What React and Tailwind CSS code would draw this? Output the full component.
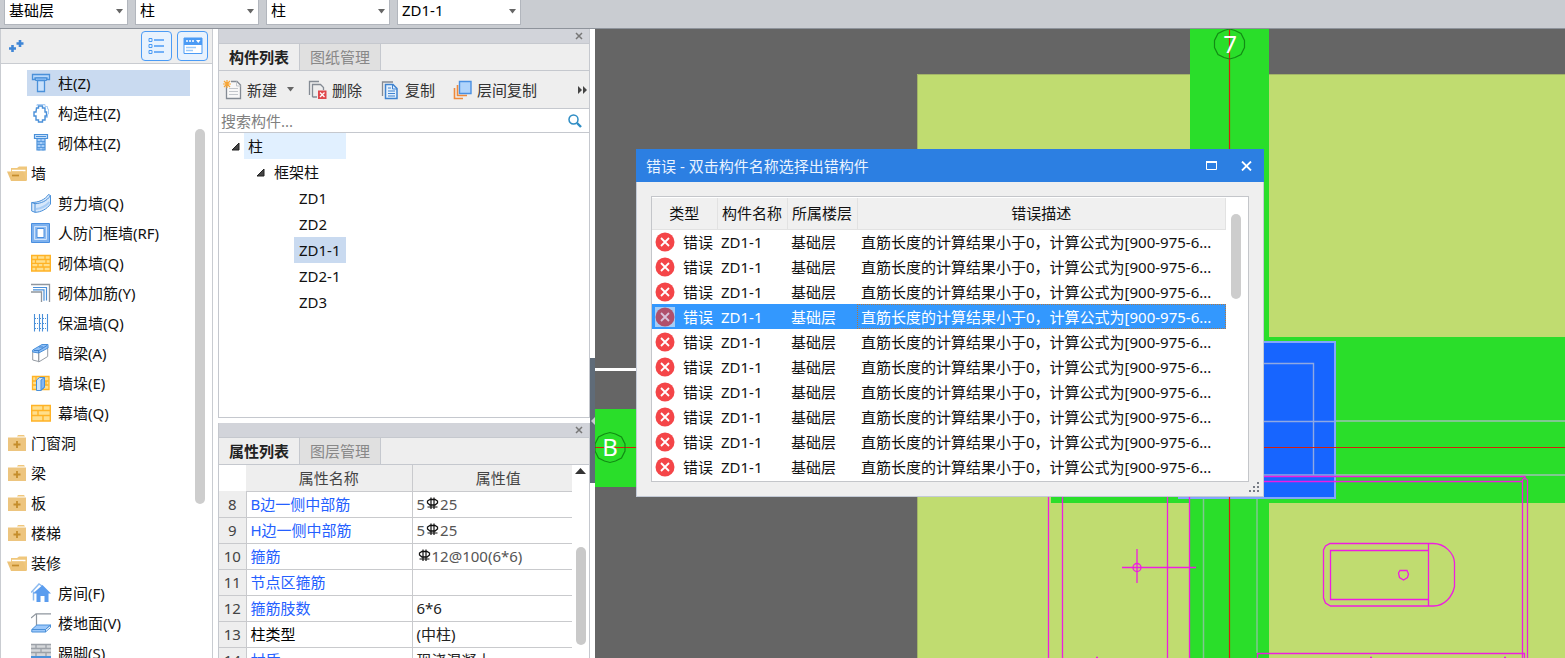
import React from "react";

const Svg = ({ w = 20, h = 20, children }) => (
  <svg width={w} height={h} viewBox={`0 0 ${w} ${h}`} fill="none" className="shrink-0" aria-hidden="true">
    {children}
  </svg>
);

const B = "#4a90d9";

const icons = {
  column: (
    <Svg>
      <path d="M1.500 1.500h17v5h-2.500v-1.500h-12v1.500h-2.500z" fill="#b9d8fb" stroke={B} strokeWidth="1.300" />
      <path d="M4.500 5h11v2.500h-11z" fill="#8fc0f7" stroke={B} />
      <path d="M6.500 7.500h7v11h-7z" fill="#c9e1fc" stroke={B} strokeWidth="1.300" />
    </Svg>
  ),
  structColumn: (
    <Svg>
      <path d="M6 3V1.500h8v2h2.500v2.500h1v5l-1 .5v3h-2.500v2" stroke="#a9cdf5" />
      <path d="M5.500 5h2v-2h4v2h2.500v4h1.500v4h-1.500v4h-2.500v2h-4v-2h-2.500v-4h-2v-4h2z" fill="#fff" stroke={B} strokeWidth="1.400" />
    </Svg>
  ),
  masonryColumn: (
    <Svg>
      <path d="M3.500 1.500h13v4h-13z" fill="#c7e0fb" stroke={B} strokeWidth="1.200" />
      <path d="M6 5.500h8v11.500h-8z" fill="#a9cff9" stroke={B} strokeWidth="1.200" />
      <path d="M6 8.500h8M6 11.500h8M6 14.500h8M10 5.500v3M8 8.500v3M12 8.500v3M10 11.500v3M8 14.500v3M12 14.500v3" stroke={B} strokeWidth=".8" />
      <path d="M5 3.500h10" stroke={B} />
    </Svg>
  ),
  shearWall: (
    <Svg>
      <path d="M.7 9.500C7 9.500 14 7 17.500 1.500l2 1v8.500C16 16 10 19.300 4 19.300L.7 18z" fill="#d7e8fb" stroke={B} />
      <path d="M.7 9.500l3.300 1.200v8.600M4 10.700C10 10.500 16 8 19.500 2.500" stroke={B} />
      <path d="M5 16C10 15.500 15 13 18.500 9" stroke="#a9cdf5" strokeWidth="2" />
    </Svg>
  ),
  doorFrame: (
    <Svg>
      <path d="M.5.500h18v19h-18z" fill="#7db1ee" stroke="#4a8fe0" />
      <path d="M3.500 3.500h12v13h-12z" fill="#8fbcf1" stroke="#cfe3fb" />
      <path d="M6 5.500h7v9h-7z" fill="#fff" stroke="#4a8fe0" />
    </Svg>
  ),
  brick: (
    <Svg>
      <path d="M.7 2.500h18.600v15.500h-18.600z" fill="#ffdf8c" stroke="#ffb326" strokeWidth="1.400" />
      <path d="M1 6.500h18M1 10.300h18M1 14h18M6.500 2.500v4M14 2.500v4M4.500 6.500v3.800M15 6.500v3.800M7 10.300v3.700M12 10.300v3.700M5 14v4M13 14v4" stroke="#ffb326" strokeWidth="1.300" />
    </Svg>
  ),
  rebar: (
    <Svg>
      <path d="M0 1.500h18.500v17.500" stroke="#8f969e" strokeWidth="1.300" />
      <path d="M0 9h10.500v10" stroke="#8f969e" strokeWidth="1.300" />
      <path d="M2 4.500h13.500v13M2 6.800h11v11" stroke={B} strokeWidth="1.200" />
    </Svg>
  ),
  insulation: (
    <Svg>
      <path d="M3.500 1v17.500M8.500 1v17.500M11.500 1v17.500M16.500 1v17.500" stroke={B} strokeWidth="1.100" />
      <path d="M4 5.500h4M12 5.500h4M4 10.500h4M12 10.500h4M4 15.500h4M12 15.500h4M9 5.500h2M9 10.500h2M9 15.500h2" stroke={B} strokeDasharray="1 1" />
    </Svg>
  ),
  hiddenBeam: (
    <Svg>
      <path d="M1.700 8.500h6v10l-6-1.500zM7.700 8.500l9-5v10l-9 5.500z" fill="#fff" stroke="#969ca4" />
      <path d="M1.700 7L11 1.500l6 0v3.500L7.700 10l-6-1z" fill="#8fc0f7" stroke={B} />
      <path d="M3 7.500h5l8-5M7.700 7.500V10M8 4l4 0" stroke="#3f83d0" />
    </Svg>
  ),
  pier: (
    <Svg>
      <path d="M1.500 3.500h16.500v13h-16.500z" fill="#ffdf8c" stroke="#ffb326" strokeWidth="1.300" />
      <path d="M1.500 8h16M1.500 12h16M5 3.500v4M15 8v4" stroke="#ffb326" strokeWidth="1.300" />
      <path d="M5.500 7l3-2.500h5v10l-3.500 3h-4.500z" fill="#d0e5fc" stroke={B} />
      <path d="M10 7v10l3.500-3V4.500z" fill="#84b7f2" stroke={B} />
    </Svg>
  ),
  curtain: (
    <Svg>
      <path d="M.7 2.500h18.600v15.500h-18.600z" fill="#ffdf8c" stroke="#ffb326" strokeWidth="1.400" />
      <path d="M1 7.500h18M1 12.500h18M12 2.500v5M7 7.500v5M12 12.500v5.500" stroke="#ffb326" strokeWidth="1.400" />
    </Svg>
  ),
  house: (
    <Svg>
      <path d="M0 9.500L8 1l3 2M2.500 8.500v9" stroke="#8dbbf0" strokeWidth="1.500" />
      <path d="M2 10.500L11.500 2 20 10.500h-2.500V19h-4v-6h-4v6h-4v-8.500z" fill="#5a9cee" />
    </Svg>
  ),
  floor: (
    <Svg>
      <path d="M0 5l5-4.200h15M5.500 1v12" stroke="#8f969e" strokeWidth="1.200" />
      <path d="M.8 16.500l5-4.500h13.700l-5 4.500v2.500h-13.700z" fill="#9cc8fa" stroke={B} />
      <path d="M.8 16.500h13.700l5-4.500v2.500l-5 4.500" stroke={B} />
    </Svg>
  ),
  skirting: (
    <Svg>
      <path d="M0 1h20v12h-20z" fill="#d5d7da" />
      <path d="M0 1.500h20M0 5.500h20M0 9.500h20M5 1.500v4M15 1.500v4M10 5.500v4M5 9.500v4M15 9.500v4" stroke="#9ca1a8" strokeWidth="1.300" />
      <path d="M0 13h20v5h-20z" fill={B} />
    </Svg>
  ),
};

const FolderOpen = () => (
  <Svg>
    <path d="M4 7V5h6l2-1.500h8V17.500H4z" fill="#f0c77c" />
    <path d="M5 7.500h13.500" stroke="#fff" strokeWidth="1.500" />
    <path d="M0 8.500h16l3.500 9.500H4z" fill="#edc378" />
    <path d="M5 12.500h7" stroke="#c58d2c" strokeWidth="1.700" />
  </Svg>
);

const FolderClosed = () => (
  <Svg>
    <path d="M10 3.500l1-1.500h6l1 1.500z" fill="#f0c77c" />
    <path d="M1 4.500h18V18H1z" fill="#edc57f" />
    <path d="M6.500 11.500h7M10 8v7" stroke="#c58d2c" strokeWidth="1.800" />
  </Svg>
);

const Rebar400 = () => (
  <svg width="13" height="13" viewBox="0 0 13 13" fill="none" stroke="#111" className="mx-px mb-1 inline-block" aria-label="HRB400">
    <path d="M4 2.500h5l2.500 1.500v2L9 8H4L1.500 6V4z" strokeWidth="1.300" />
    <path d="M5 .5V12M8 .5V12M1.500 10h10" strokeWidth="1.200" />
  </svg>
);

const tree = [
  ["柱(Z)", "column", true],
  ["构造柱(Z)", "structColumn"],
  ["砌体柱(Z)", "masonryColumn"],
  ["墙", "open"],
  ["剪力墙(Q)", "shearWall"],
  ["人防门框墙(RF)", "doorFrame"],
  ["砌体墙(Q)", "brick"],
  ["砌体加筋(Y)", "rebar"],
  ["保温墙(Q)", "insulation"],
  ["暗梁(A)", "hiddenBeam"],
  ["墙垛(E)", "pier"],
  ["幕墙(Q)", "curtain"],
  ["门窗洞", "closed"],
  ["梁", "closed"],
  ["板", "closed"],
  ["楼梯", "closed"],
  ["装修", "open"],
  ["房间(F)", "house"],
  ["楼地面(V)", "floor"],
  ["踢脚(S)", "skirting"],
];

function TopBar() {
  const items = [
    ["楼层", "基础层"],
    ["构件类别", "柱"],
    ["构件类型", "柱"],
    ["构件", "ZD1-1"],
  ];
  return (
    <header className="flex h-[29px] shrink-0 items-start gap-[7px] border-b border-[#8e939b] bg-[#c9ccd1] pl-1">
      {items.map(([label, value]) => (
        <div key={label} className="relative">
          <select
            aria-label={label}
            defaultValue={value}
            className="block h-[25px] w-[124px] appearance-none border-x border-b border-[#b2b6bd] bg-white px-1 pb-1 text-[15px] leading-5 text-black outline-none"
          >
            <option>{value}</option>
          </select>
          <svg className="pointer-events-none absolute top-[9px] right-[5px]" width="7" height="5" viewBox="0 0 7 5" aria-hidden="true">
            <path d="M0 0h7L3.500 4.500z" fill="#666" />
          </svg>
        </div>
      ))}
    </header>
  );
}

function Navigator() {
  return (
    <aside className="relative flex w-[213px] shrink-0 flex-col border-x border-[#c9ccd1] bg-white">
      <div className="flex h-[35px] shrink-0 items-center gap-[5px] border-b border-[#c9ccd1] bg-[#eee] pr-1 pl-[7px]">
        <button aria-label="添加" className="mr-auto">
          <Svg w={17} h={16}>
            <path d="M1 10.500h7M4.500 7v7M8.500 5.500h7M12 2v7" stroke="#3f86d6" strokeWidth="2.600" />
          </Svg>
        </button>
        <button aria-label="列表视图" className="grid h-[30px] w-[31px] place-items-center rounded border border-[#4b9bf5] bg-[#e8f2fd]">
          <Svg w={17} h={18}>
            <path d="M1 1.500h3v3h-3zM1 7.500h3v3h-3zM1 13.500h3v3h-3z" stroke="#4b9bf5" />
            <path d="M6 3h10M6 9h10M6 15h10" stroke="#4b9bf5" strokeWidth="1.300" />
          </Svg>
        </button>
        <button aria-label="面板视图" className="grid h-[30px] w-[31px] place-items-center rounded border border-[#4b9bf5] bg-[#e8f2fd]">
          <Svg w={20} h={18}>
            <path d="M1 1h18v15.500h-18z" fill="#fff" stroke="#4b9bf5" />
            <path d="M1 1h18v7h-18z" fill="#4b9bf5" />
            <path d="M3 4h2M6 4h2M9 4h2" stroke="#fff" strokeWidth="1.500" />
            <path d="M13 3h4.500l-2.250 3z" fill="#fff" />
            <path d="M3 10.500h10M3 13.500h7" stroke="#9ccaf9" strokeWidth="1.500" />
          </Svg>
        </button>
      </div>
      <ul className="min-h-0 flex-1 overflow-hidden pt-1">
        {tree.map(([label, icon, selected]) => {
          const group = icon === "open" || icon === "closed";
          return (
            <li key={label} className={group ? "flex h-[30px] items-center pl-[6px]" : "flex h-[30px] items-center pr-[22px] pl-[26px]"}>
              <button
                className={
                  group
                    ? "flex items-center gap-1 text-left"
                    : selected
                      ? "flex h-[26px] w-full items-center gap-[7px] bg-[#c9daf0] pl-1 text-left"
                      : "flex h-[26px] w-full items-center gap-[7px] pl-1 text-left"
                }
              >
                {icon === "open" ? <FolderOpen /> : icon === "closed" ? <FolderClosed /> : icons[icon]}
                <span>{label}</span>
              </button>
            </li>
          );
        })}
      </ul>
      <div className="absolute top-[100px] right-[7px] h-[375px] w-[10px] rounded-full bg-[#cdcdcd]" />
    </aside>
  );
}

function PanelHead({ tabs }) {
  return (
    <>
      <div className="flex h-[15px] shrink-0 items-center justify-end border-b border-[#c5c8ce] bg-[#d2d4da] pr-[6px]">
        <button aria-label="关闭">
          <Svg w={8} h={8}>
            <path d="M1 1l6 6M7 1L1 7" stroke="#777" strokeWidth="1.500" />
          </Svg>
        </button>
      </div>
      <div role="tablist" className="flex h-[27px] shrink-0 border-b border-[#c5c8ce] bg-[#eee]">
        <button role="tab" aria-selected="true" className="w-[81px] border-r border-[#c5c8ce] font-bold text-[#222]">{tabs[0]}</button>
        <button role="tab" aria-selected="false" className="w-[81px] border-r border-[#c5c8ce] bg-[#e0e0e0] text-[#888]">{tabs[1]}</button>
      </div>
    </>
  );
}

const Expander = () => (
  <Svg w={9} h={9}>
    <path d="M8 1v7H1z" fill="#444" stroke="#222" />
  </Svg>
);

function ComponentList() {
  return (
    <section className="flex h-[389px] shrink-0 flex-col border border-t-0 border-[#c5c8ce] bg-white">
      <PanelHead tabs={["构件列表", "图纸管理"]} />
      <div className="flex h-[38px] shrink-0 items-center border-b border-[#c5c8ce] bg-[#eee] pl-1 text-[#333]">
        <button className="flex items-center gap-[5px]">
          <Svg w={19} h={20}>
            <path d="M3.500 5v13.500h14V5L14 1.500H8" fill="#f8f8f8" stroke="#848b94" strokeWidth="1.300" />
            <path d="M13.500 1.500V6H17.500M6 8.500h9M6 11.500h9M6 14.500h9" stroke="#c3c7cc" />
            <path d="M4 0v8M0 4h8M1 1l6 6M7 1L1 7" stroke="#f7a535" strokeWidth="1.200" />
          </Svg>
          新建
          <svg width="7" height="5" viewBox="0 0 7 5" className="ml-[5px]" aria-hidden="true">
            <path d="M0 0h7L3.500 4.500z" fill="#666" />
          </svg>
        </button>
        <button className="ml-[14px] flex items-center gap-[5px]">
          <Svg w={19} h={20}>
            <path d="M1.500 15V1.500H11M4.500 17V4.500h8l3 3V10M4.500 17H9" stroke="#848b94" strokeWidth="1.300" />
            <path d="M10 10.500h8.500v8.500H10z" fill="#e0474c" />
            <path d="M12 12.500l4.500 4.500M16.500 12.500L12 17" stroke="#fff" strokeWidth="1.300" />
          </Svg>
          删除
        </button>
        <button className="ml-[19px] flex items-center gap-[6px]">
          <Svg w={18} h={20}>
            <path d="M1.500 16V2H12" stroke="#848b94" strokeWidth="1.300" />
            <path d="M4.500 4.500h7.500l4 4v10h-11.500z" fill="#e3f0fd" stroke="#3f83d0" strokeWidth="1.500" />
            <path d="M11.500 4.500v4.500h4.500M7 8h3M7 11h7M7 13.500h7M7 16h7" stroke="#3f83d0" />
          </Svg>
          复制
        </button>
        <button className="ml-[18px] flex items-center gap-[5px]">
          <Svg w={19} h={20}>
            <path d="M1.500 8v10.500H10M4.500 5v10.500H14" stroke="#ef8a3c" strokeWidth="1.600" />
            <path d="M6.500 1.500h11.500v12h-11.500z" fill="#b0d4fb" stroke="#4a90e2" strokeWidth="1.400" />
          </Svg>
          层间复制
        </button>
        <button aria-label="更多" className="mr-[1px] ml-auto">
          <Svg w={10} h={8}>
            <path d="M0 0v8l4-4zM5 0v8l4-4z" fill="#444" />
          </Svg>
        </button>
      </div>
      <div className="flex h-6 shrink-0 items-center border-b border-[#c5c8ce] pr-[7px] pl-[2px]">
        <input aria-label="搜索构件" placeholder="搜索构件..." className="min-w-0 flex-1 text-[15px] outline-none placeholder:text-[#808080]" />
        <Svg w={14} h={14}>
          <circle cx="5.500" cy="5.500" r="4.500" stroke="#2d8cc4" strokeWidth="1.500" />
          <path d="M9 9l4 4" stroke="#2d8cc4" strokeWidth="2.400" />
        </Svg>
      </div>
      <ul>
        <li className="flex h-[26px] items-center gap-1 pl-3">
          <Expander />
          <span className="h-[26px] w-[102px] bg-[#e1f0ff] pl-1 leading-[26px]">柱</span>
        </li>
        <li className="flex h-[26px] items-center gap-[9px] pl-[37px]">
          <Expander />
          框架柱
        </li>
        {["ZD1", "ZD2", "ZD1-1", "ZD2-1", "ZD3"].map((n) => (
          <li key={n} className="flex h-[26px] items-center pl-[75px]">
            <span className={n === "ZD1-1" ? "h-[26px] bg-[#c9daf0] px-[5px] leading-[26px]" : "h-[26px] px-[5px] leading-[26px]"}>{n}</span>
          </li>
        ))}
      </ul>
    </section>
  );
}

const props = [
  [8, "B边一侧中部筋", <>5<Rebar400 />25</>, true],
  [9, "H边一侧中部筋", <>5<Rebar400 />25</>, true],
  [10, "箍筋", <><Rebar400 />12@100(6*6)</>, true],
  [11, "节点区箍筋", "", true],
  [12, "箍筋肢数", "6*6", true],
  [13, "柱类型", "(中柱)", false],
  [14, "材质", "现浇混凝土", true],
];

function PropertyList() {
  return (
    <section className="flex min-h-0 flex-1 flex-col overflow-hidden border-x border-[#c5c8ce] bg-white">
      <PanelHead tabs={["属性列表", "图层管理"]} />
      <div className="relative min-h-0 flex-1 overflow-hidden pr-[17px]">
        <table className="w-full table-fixed border-collapse text-left">
          <thead>
            <tr className="h-[26px] text-[#444]">
              <th aria-label="序号" className="w-[27px] bg-white" />
              <th className="w-[166px] border-r border-b border-[#c9cacd] bg-[#eee] p-0 text-center font-normal">属性名称</th>
              <th className="border-b border-[#c9cacd] bg-[#eee] p-0 pl-3 text-center font-normal">属性值</th>
            </tr>
          </thead>
          <tbody>
            {props.map(([n, name, value, linked]) => (
              <tr key={n} className="h-[26px]">
                <td className="border-r border-b border-[#c9cacd] bg-[#eee] p-0 text-center text-[#444]">{n}</td>
                <td className={linked ? "border-r border-b border-[#c9cacd] p-0 pl-1 text-[#2460ff]" : "border-r border-b border-[#c9cacd] p-0 pl-1 text-black"}>{name}</td>
                <td className={n < 11 ? "border-b border-[#c9cacd] p-0 pl-1 text-[#555]" : "border-b border-[#c9cacd] p-0 pl-1 text-[#222]"}>{value}</td>
              </tr>
            ))}
          </tbody>
        </table>
        <svg className="absolute top-[3px] right-[3px]" width="11" height="6" viewBox="0 0 11 6" aria-hidden="true">
          <path d="M0 6L5.500 0 11 6z" fill="#333" />
        </svg>
        <div className="absolute top-[82px] right-[3px] h-[98px] w-[10px] rounded-full bg-[#c9c9c9]" />
      </div>
    </section>
  );
}

function Drawing() {
  return (
    <svg
      className="absolute inset-0 h-full w-full"
      viewBox="595 29 970 629"
      preserveAspectRatio="xMinYMin slice"
      fill="none"
      role="img"
      aria-label="平面图"
    >
      <path d="M595 29h970v629H595z" fill="#656565" />
      <path d="M917 74h648v584H917z" fill="#c0dc70" />
      <path d="M917.500 658V74.500H1565" stroke="#a3b567" />
      <path d="M1190 29h79v629h-79zM1051 337h514v166h-514zM595 409h41v78h-41z" fill="#2ade2a" />
      <path d="M595 369.500h41" stroke="#fff" strokeWidth="3" />
      <path d="M1178 341h158v158h-158z" fill="#82a6fb" />
      <path d="M1180 343h154v154h-154z" fill="#1765ff" />
      <path d="M1203.500 499v159M1257 499v154" stroke="#80c890" strokeWidth="1.500" />
      <path d="M1200 363.500h113.500V475M1264 421.500h70M1264 475h70" stroke="#8fa9e2" strokeWidth="1.400" />
      <path d="M1336 421h229M1336 475h229" stroke="#80c890" strokeWidth="1.800" />
      <path d="M1229.500 29v629M595 447.500h41M1264 447.500h301" stroke="#d4200c" strokeWidth="1.200" />
      <g stroke="#ee1de0" strokeWidth="1.300">
        <path d="M1048.500 490v168M1062.500 490v168M1167.500 490v168M1189.500 497v161" />
        <path d="M1122 567.500h74M1137 549v34" />
        <path d="M1264 476.500h261v3M1264 481.500h258M1522.500 479v179M1527.500 480v178M1522 480l2.500-2 3 2" />
        <path d="M1257.500 658v-4.500h267v4.500" />
        <path d="M1428.500 543v63M1428.500 550.500h-98v49h98" />
        <path d="M1096 657.500h2M1370 657.500h2M1504 657.500h2" />
        <circle cx="1137" cy="567.500" r="4" />
        <path d="M1330 543.500h103c12 0 21 10 21.500 19v24c-2 10-10 19.500-21 19.500h-103l-5-3-2-5v-48l2-4z" />
        <path d="M1400 570.500h7l1.500 3.500-1 3.500-4 2.500-4-2.500-1-4.500z" />
      </g>
      <g stroke="#128c14" strokeWidth="1.200">
        <path d="M1224 30.500l5.500-1.500 5.500 1.500 6 3 3.500 7v7l-3.500 7-6 3-5.500 1.500-5.500-1.500-6-3-3.500-7v-7l3.500-7z" />
        <path d="M604.500 434l5.500-1.500 5.500 1.500 6 3 3.500 7v7l-3.500 7-6 3-5.500 1.500-5.500-1.500-6-3-3.500-7v-7l3.500-7z" />
      </g>
      <g fill="#fff" fontFamily="'Noto Sans', sans-serif" fontSize="24" textAnchor="middle">
        <text x="1230" y="53">7</text>
        <text x="610" y="456">B</text>
      </g>
    </svg>
  );
}

const ErrorIcon = ({ selected }) => (
  <Svg>
    {selected && <path d="M0 0h20v20H0z" fill="#a6cdf5" />}
    <circle cx="10" cy="10" r="9.500" fill={selected ? "#b0506c" : "#f44548"} />
    <path d="M6 6l8 8M14 6l-8 8" stroke={selected ? "#d9c3dc" : "#fff"} strokeWidth="1.800" />
  </Svg>
);

function ErrorDialog() {
  return (
    <div role="dialog" aria-labelledby="error-title" className="absolute top-[120px] left-[41px] w-[628px] border border-t-0 border-[#c3cad6] bg-[#efefef]">
      <div className="-mx-px flex h-[33px] items-center bg-[#2c7fe2] pr-3 pl-[10px] text-[#eaf3ff]">
        <h2 id="error-title" className="mr-auto">错误 - 双击构件名称选择出错构件</h2>
        <button aria-label="最大化" className="mr-6">
          <Svg w={11} h={9}>
            <path d="M.5.500h10v8H.5z" stroke="#fff" />
            <path d="M0 1h11" stroke="#fff" strokeWidth="2" />
          </Svg>
        </button>
        <button aria-label="关闭">
          <Svg w={11} h={10}>
            <path d="M1 .5l9 9M10 .5l-9 9" stroke="#fff" strokeWidth="1.800" />
          </Svg>
        </button>
      </div>
      <div className="relative p-[14px]">
        <div className="relative border border-[#c4c6ca] bg-white pt-px pr-[22px] pb-[2px]">
          <table className="w-full table-fixed border-collapse text-left">
            <thead>
              <tr className="h-[31px] bg-[#f0f0f0]">
                <th className="w-[65px] border-r border-b border-[#e2e2e2] p-0 text-center font-normal">类型</th>
                <th className="w-[70px] border-r border-b border-[#e2e2e2] p-0 text-center font-normal">构件名称</th>
                <th className="w-[70px] border-r border-b border-[#e2e2e2] p-0 text-center font-normal">所属楼层</th>
                <th className="border-r border-b border-[#e2e2e2] p-0 text-center font-normal">错误描述</th>
              </tr>
            </thead>
            <tbody>
              {Array.from({ length: 10 }, (_, i) => {
                const sel = i === 3;
                return (
                  <tr key={i} className={sel ? "h-[25px] bg-[#3398fe] text-white" : "h-[25px]"}>
                    <td className="p-0 pl-[3px]">
                      <div className="flex items-center gap-[8px] whitespace-nowrap">
                        <ErrorIcon selected={sel} />
                        错误
                      </div>
                    </td>
                    <td className="p-0 pl-1">ZD1-1</td>
                    <td className="p-0 pl-1">基础层</td>
                    <td className={sel ? "p-0 pl-1 whitespace-nowrap outline-1 -outline-offset-1 outline-dotted outline-[#b5763c]" : "p-0 pl-1 whitespace-nowrap"}>
                      直筋长度的计算结果小于0，计算公式为[900-975-6...
                    </td>
                  </tr>
                );
              })}
            </tbody>
          </table>
          <div className="absolute top-[17px] right-[7px] h-[85px] w-[10px] rounded-full bg-[#cdcdcd]" />
        </div>
        <svg className="absolute right-[3px] bottom-[3px]" width="11" height="11" viewBox="0 0 11 11" fill="#777c85" aria-hidden="true">
          <path d="M8 0h2v2H8zM4 4h2v2H4zM8 4h2v2H8zM0 8h2v2H0zM4 8h2v2H4zM8 8h2v2H8z" />
        </svg>
      </div>
    </div>
  );
}

export default function App() {
  return (
    <div className="flex h-screen flex-col overflow-hidden bg-white font-['Noto_Sans','Noto_Sans_CJK_SC',sans-serif] text-[15px] leading-5 text-[#111]">
      <TopBar />
      <div className="flex min-h-0 flex-1">
        <Navigator />
        <div className="ml-[5px] flex w-[372px] shrink-0 flex-col gap-[5px]">
          <ComponentList />
          <PropertyList />
        </div>
        <div className="flex w-[5px] shrink-0 flex-col pt-[329px]">
          <button aria-label="折叠面板" className="grid h-[125px] w-[5px] place-items-center bg-[#5f6b78]">
            <Svg w={5} h={8}>
              <path d="M5 0v8L1 4z" fill="#c9ccd1" />
            </Svg>
          </button>
        </div>
        <main className="relative min-w-0 flex-1 overflow-hidden">
          <Drawing />
          <ErrorDialog />
        </main>
      </div>
    </div>
  );
}
